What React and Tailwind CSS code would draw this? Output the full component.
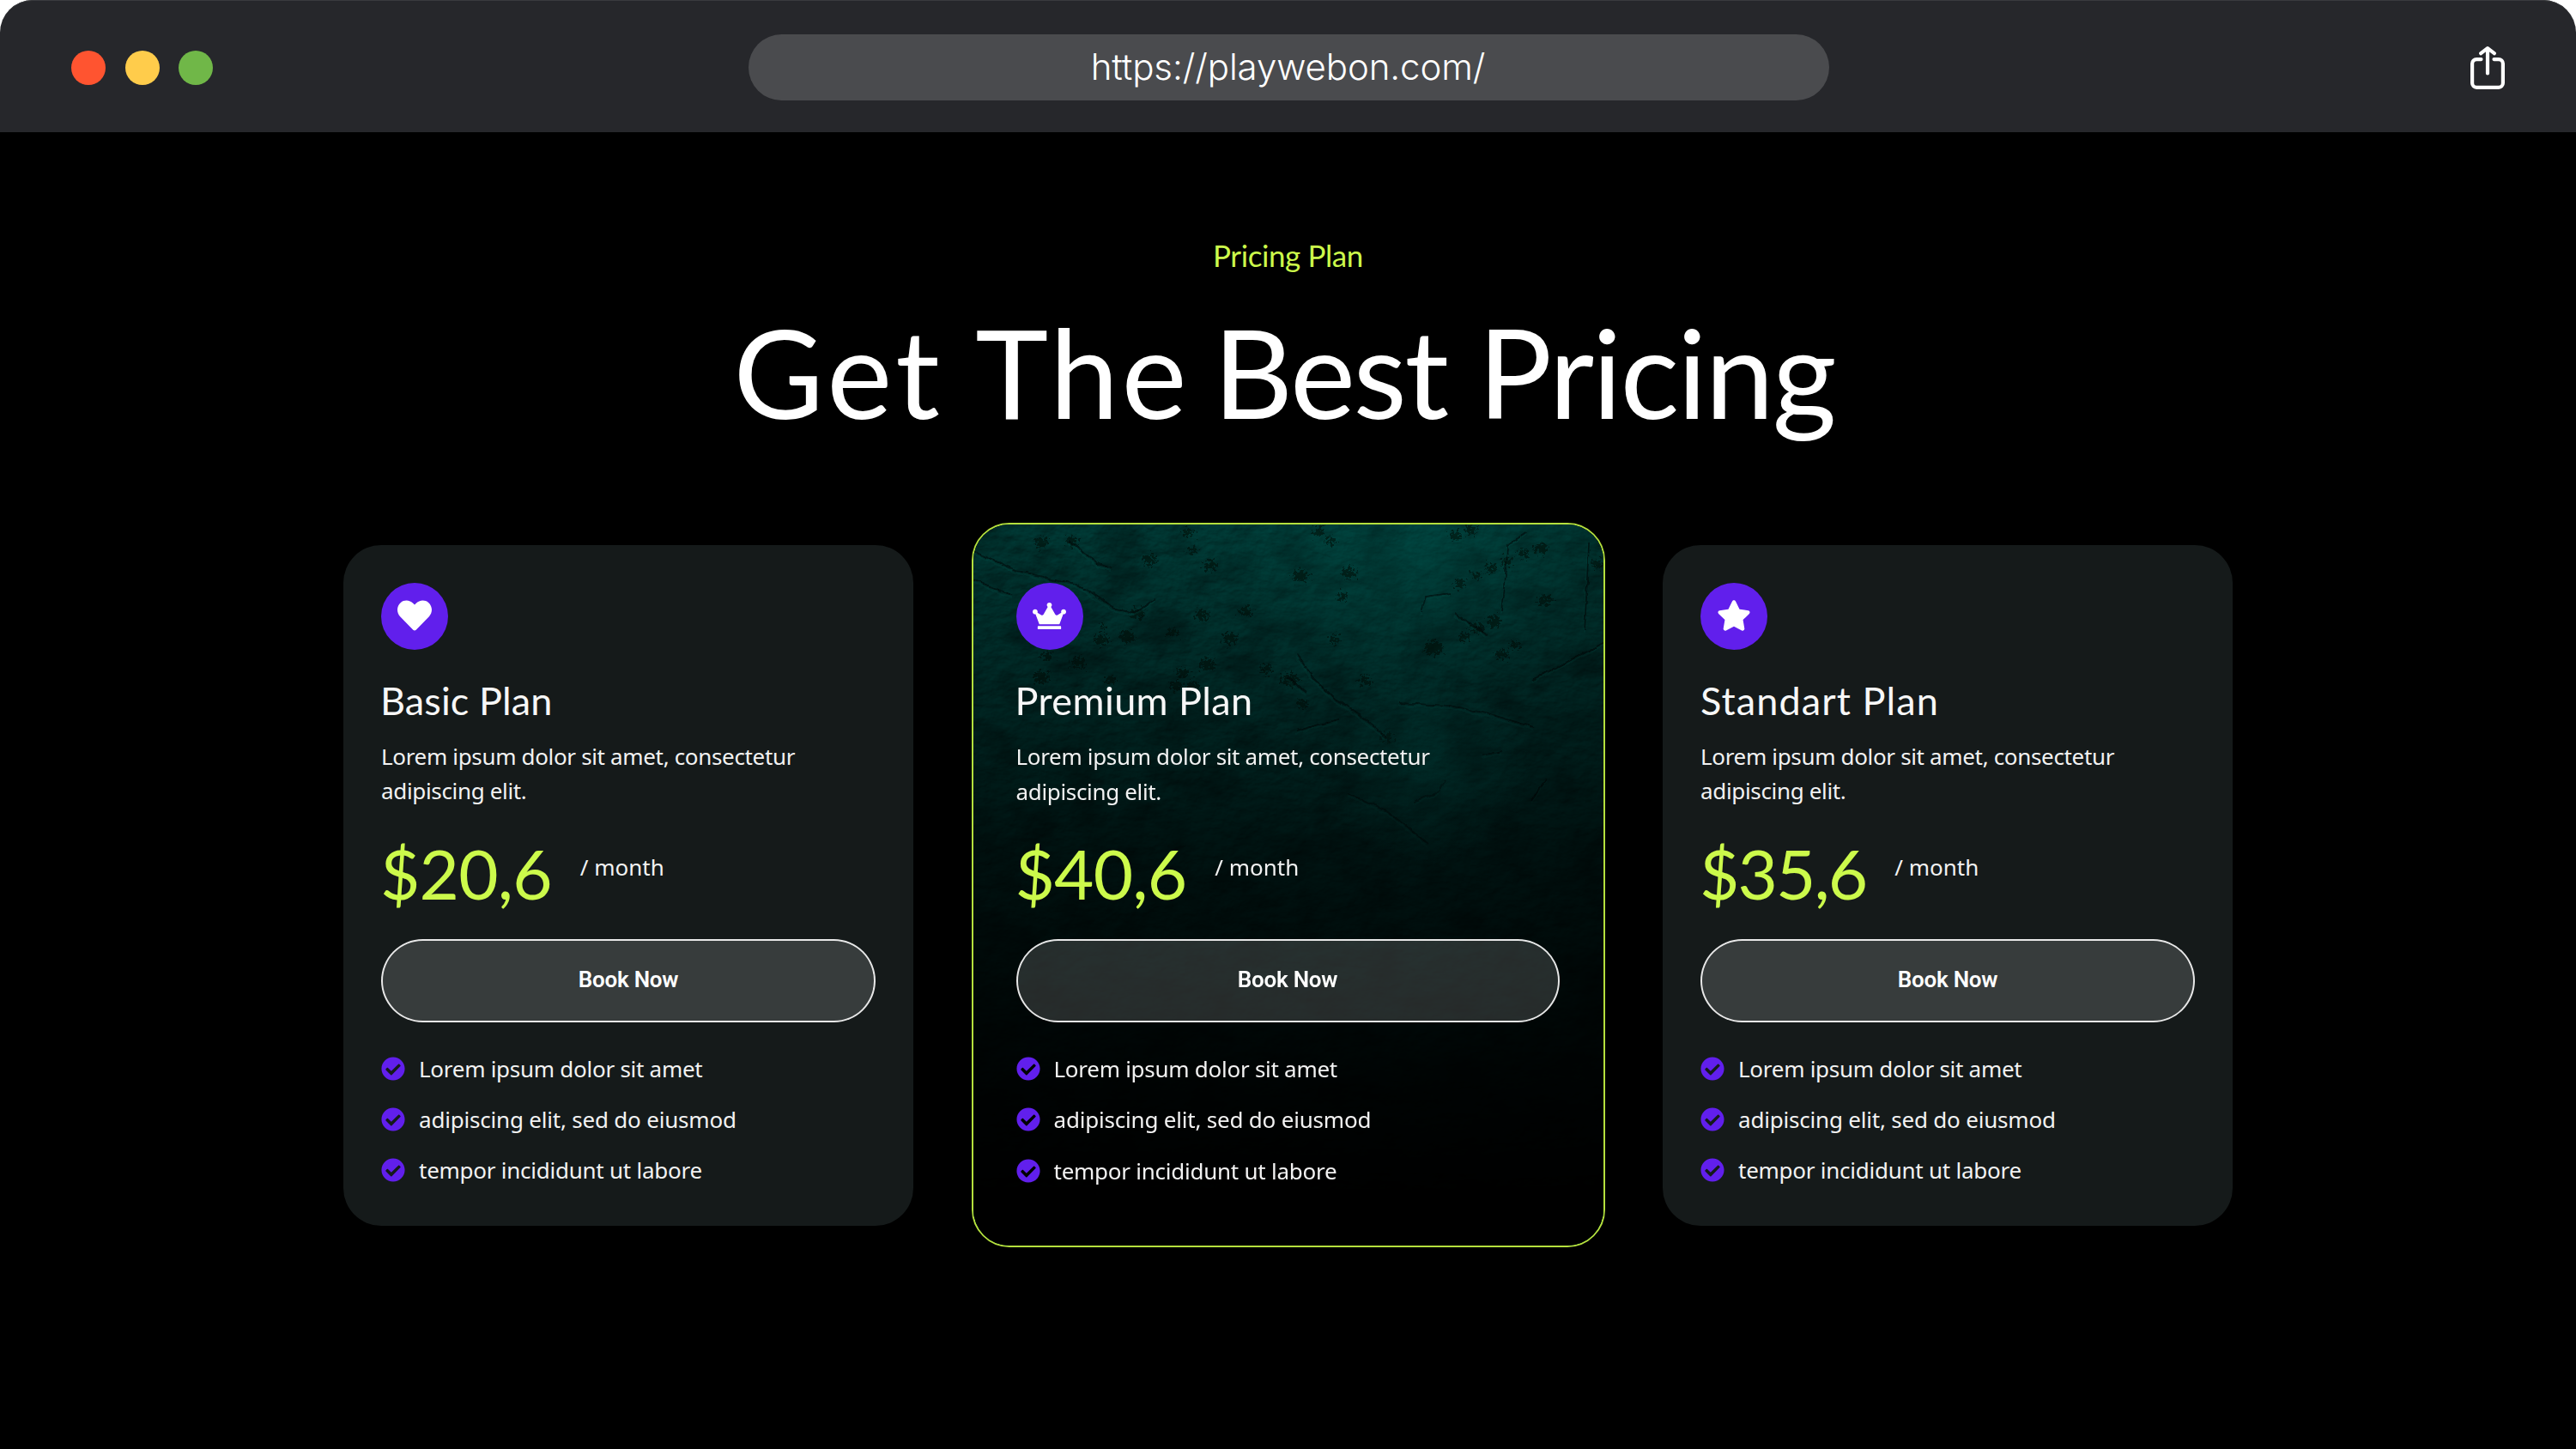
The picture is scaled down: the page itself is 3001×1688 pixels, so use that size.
import { FaCheckCircle, FaCrown, FaHeart, FaStar } from 'react-icons/fa';

const features = [
  { text: 'Lorem ipsum dolor sit amet', className: 'tracking-[-0.27px]' },
  { text: 'adipiscing elit, sed do eiusmod', className: 'tracking-[-0.2px]' },
  { text: 'tempor incididunt ut labore', className: 'tracking-[-0.25px]' },
];

const plans = [
  {
    name: 'Basic Plan',
    price: '$20,6',
    icon: <FaHeart size={40} />,
    nameClass: '-ml-px tracking-[0.1px]',
    priceClass: 'tracking-[-0.8px]',
  },
  {
    name: 'Premium Plan',
    price: '$40,6',
    icon: <FaCrown size={39} />,
    nameClass: '-ml-px tracking-[0.4px]',
    priceClass: 'tracking-[-0.8px]',
    featured: true,
  },
  {
    name: 'Standart Plan',
    price: '$35,6',
    icon: <FaStar size={40} />,
    nameClass: 'tracking-[1.1px]',
    priceClass: 'tracking-[-1.9px]',
  },
];

const cracks = [
  'M0 30 L6 34 L49 53 L89 63 L116 68 L136 79 L149 88 L166 99 L189 103 L212 86',
  'M112 18 L129 33 L146 46 L162 51',
  'M0 64 L24 74 L46 82',
  'M376 151 L396 178 L422 204 L449 221 L482 248',
  'M366 178 L388 196',
  'M652 181 L689 161 L736 137',
  'M645 8 L622 24 L619 71 L616 101',
  'M562 103 L582 118 L599 129',
  'M376 241 L399 234 L426 228',
  'M496 208 L556 211 L602 221 L652 236',
  'M512 323 L542 311 L549 298',
  'M717 21 L712 124',
  'M522 102 L527 84 L556 80',
  'M592 269 L616 264',
  'M650 322 L668 296',
  'M436 314 L480 332 L504 352 L530 372',
];

const spots = [
  [402, 8, 7], [416, 19, 6], [567, 69, 6], [586, 59, 5], [604, 51, 7], [621, 43, 6], [641, 34, 6],
  [561, 13, 7], [579, 6, 7], [607, 113, 8], [587, 121, 7], [571, 131, 6], [632, 141, 6], [616, 151, 7],
  [666, 88, 8], [661, 28, 8], [727, 46, 7], [482, 248, 6], [536, 144, 11], [192, 104, 8], [276, 48, 7],
  [256, 31, 5], [299, 133, 8], [179, 131, 9], [272, 163, 9], [244, 173, 7], [236, 188, 7], [256, 188, 8],
  [341, 168, 7], [369, 181, 10], [149, 134, 8], [86, 153, 6], [79, 21, 8], [116, 19, 7], [317, 101, 7],
  [232, 126, 6], [266, 106, 8], [206, 41, 8], [159, 181, 6], [79, 178, 9], [122, 161, 8], [151, 119, 3],
  [382, 60, 9], [438, 56, 8], [430, 84, 6], [421, 134, 6], [456, 182, 7], [384, 209, 6], [250, 8, 7],
];

function StoneTexture() {
  return (
    <svg className="absolute inset-0 h-full w-full" viewBox="0 0 734 840" preserveAspectRatio="none" aria-hidden="true">
      <defs>
        <filter id="stone" x="0" y="0" width="100%" height="100%" colorInterpolationFilters="sRGB">
          <feTurbulence type="fractalNoise" baseFrequency="0.06 0.09" numOctaves="5" seed="11" />
          <feDiffuseLighting surfaceScale="1.4" lightingColor="#00504a">
            <feDistantLight azimuth="240" elevation="58" />
          </feDiffuseLighting>
        </filter>
        <filter id="blotch" x="0" y="0" width="100%" height="100%" colorInterpolationFilters="sRGB">
          <feTurbulence type="fractalNoise" baseFrequency="0.02 0.028" numOctaves="6" seed="4" />
          <feColorMatrix values="0 0 0 0 0  0 0 0 0 0.04  0 0 0 0 0.04  2.8 0 0 0 -1.15" />
        </filter>
        <filter id="rough" x="-10%" y="-10%" width="120%" height="120%">
          <feTurbulence type="fractalNoise" baseFrequency="0.3" numOctaves="3" seed="2" />
          <feDisplacementMap in="SourceGraphic" scale="18" xChannelSelector="R" yChannelSelector="G" />
          <feGaussianBlur stdDeviation="0.7" />
        </filter>
        <filter id="jag" x="-10%" y="-10%" width="120%" height="120%">
          <feTurbulence type="fractalNoise" baseFrequency="0.07" numOctaves="3" seed="8" />
          <feDisplacementMap in="SourceGraphic" scale="6" xChannelSelector="R" yChannelSelector="G" />
          <feGaussianBlur stdDeviation="0.5" />
        </filter>
        <linearGradient id="fade" x1="0" y1="0" x2="0" y2="1">
          <stop offset="0" stopColor="#000" stopOpacity="0.12" />
          <stop offset="0.15" stopColor="#000" stopOpacity="0.3" />
          <stop offset="0.3" stopColor="#000" stopOpacity="0.5" />
          <stop offset="0.45" stopColor="#000" stopOpacity="0.71" />
          <stop offset="0.6" stopColor="#000" stopOpacity="0.83" />
          <stop offset="0.78" stopColor="#000" stopOpacity="0.94" />
          <stop offset="0.95" stopColor="#000" stopOpacity="1" />
        </linearGradient>
        <linearGradient id="side" x1="0" y1="0" x2="1" y2="0">
          <stop offset="0" stopColor="#000" stopOpacity="0.12" />
          <stop offset="0.35" stopColor="#000" stopOpacity="0.08" />
          <stop offset="0.7" stopColor="#000" stopOpacity="0" />
          <stop offset="1" stopColor="#000" stopOpacity="0.2" />
        </linearGradient>
        <radialGradient id="glow">
          <stop offset="0" stopColor="#006058" stopOpacity="0.35" />
          <stop offset="1" stopColor="#006058" stopOpacity="0" />
        </radialGradient>
      </defs>
      <rect width="734" height="840" filter="url(#stone)" />
      <rect width="734" height="840" filter="url(#blotch)" opacity="0.32" />
      <ellipse cx="520" cy="50" rx="300" ry="150" fill="url(#glow)" />
      <g filter="url(#rough)" fill="#001211" opacity="0.6">
        {spots.map(([x, y, r]) => (
          <ellipse key={`${x}-${y}`} cx={x} cy={y} rx={r} ry={r * 0.75} />
        ))}
      </g>
      <g filter="url(#jag)" fill="none">
        {cracks.map((d) => (
          <g key={d}>
            <path d={d} stroke="#0a6a61" strokeOpacity="0.3" strokeWidth="2" transform="translate(-1 3)" />
            <path d={d} stroke="#000d0c" strokeOpacity="0.65" strokeWidth="1.7" />
          </g>
        ))}
      </g>
      <rect width="734" height="840" fill="url(#side)" />
      <rect width="734" height="840" fill="url(#fade)" />
      <ellipse cx="530" cy="285" rx="120" ry="110" fill="url(#glow)" opacity="0.4" />
    </svg>
  );
}

function ShareIcon() {
  return (
    <svg width="40" height="50" viewBox="0 0 40 50" fill="none" stroke="#fff" strokeWidth="4.2" strokeLinecap="round" strokeLinejoin="round">
      <path d="M12.5 15.1H7.1a5 5 0 0 0-5 5v22.7a5 5 0 0 0 5 5h25.8a5 5 0 0 0 5-5V20.1a5 5 0 0 0-5-5h-5.4" />
      <path d="M20 3v28.5M12.2 8.2 20 2.2l7.8 6" />
    </svg>
  );
}

function BrowserBar() {
  return (
    <header className="grid h-[154px] grid-cols-[1fr_1259px_1fr] items-center rounded-t-[38px] bg-[#26272b] px-[83px] pt-[3px] shadow-[inset_0_2px_0_-1px_#3a3b3e]">
      <div className="mt-px flex gap-[22.5px]">
        <span className="size-10 rounded-full bg-[#ff5430]" />
        <span className="size-10 rounded-full bg-[#ffcc4b]" />
        <span className="size-10 rounded-full bg-[#70b748]" />
      </div>
      <div className="ml-px h-[77px] w-[1259px] rounded-full bg-[#4a4b4e] pr-0.5 text-center font-['Inter',sans-serif] text-[42px] leading-[76px] font-light tracking-[-0.1px] text-white">
        https://playwebon.com/
      </div>
      <div className="mt-px flex justify-end">
        <ShareIcon />
      </div>
    </header>
  );
}

function PlanCard({ plan }) {
  return (
    <article
      className={
        plan.featured
          ? 'relative h-[844px] w-[738px] overflow-hidden rounded-[44px] border-2 border-[#b5e03d] bg-black pt-[68px] pr-[51px] pl-[50px]'
          : 'relative h-[793px] w-[664px] overflow-hidden rounded-[44px] bg-[#151a1a] px-11 pt-11'
      }
    >
      {plan.featured && <StoneTexture />}
      <div className="relative">
        <div className="flex size-[78px] items-center justify-center rounded-full bg-[#611fec] pb-0.5 text-white">
          {plan.icon}
        </div>
        <h3 className={`mt-8 font-['Lato',sans-serif] text-[45px] leading-[54px] text-[#f7f7f7] ${plan.nameClass}`}>
          {plan.name}
        </h3>
        <p className="mt-[18px] leading-[40.6px] tracking-[-0.34px]">
          Lorem ipsum dolor sit amet, consectetur
          <br />
          adipiscing elit.
        </p>
        <div className="mt-[27px] -ml-px flex gap-[33px]">
          <span className={`font-['Lato',sans-serif] text-[80px] leading-[96px] text-[#ccfa4b] ${plan.priceClass}`}>
            {plan.price}
          </span>
          <span className="mt-[21px] leading-10">/ month</span>
        </div>
        <button className="mt-[29px] block h-[97px] w-full rounded-full border-2 border-white/90 bg-white/15 bg-clip-padding pb-0.5 font-['Roboto',sans-serif] text-[26px] font-semibold tracking-[-0.25px] text-white">
          Book Now
        </button>
        <ul className="mt-[34px] flex flex-col gap-[19.3px]">
          {features.map((feature) => (
            <li key={feature.text} className="flex items-center gap-4 leading-10">
              <FaCheckCircle size={28} className="text-[#611fec]" />
              <span className={feature.className}>{feature.text}</span>
            </li>
          ))}
        </ul>
      </div>
    </article>
  );
}

export default function App() {
  return (
    <div className="h-[1688px] w-[3001px] overflow-hidden bg-white">
      <BrowserBar />
      <main className="h-[1534px] bg-black pt-[121.5px] font-['Noto_Sans',sans-serif] text-[26px] text-[#f2f2f2]">
        <p className="text-center font-['Lato',sans-serif] text-[35px] leading-[42px] tracking-[-0.4px] text-[#ccfa4b]">
          Pricing Plan
        </p>
        <h2 className="mt-[29px] pr-[9px] text-center font-['Lato',sans-serif] text-[144px] leading-[172px] text-white">
          <span className="tracking-[4.5px]">Get</span>{' '}
          <span className="tracking-[3px]">The</span>{' '}
          <span className="-ml-[9px] tracking-[-2.4px]">Best</span>{' '}
          <span className="-ml-px tracking-[-2.1px]">Pricing</span>
        </h2>
        <section className="mt-[90.5px] flex items-center justify-center gap-[67.5px]">
          {plans.map((plan) => (
            <PlanCard key={plan.name} plan={plan} />
          ))}
        </section>
      </main>
    </div>
  );
}
